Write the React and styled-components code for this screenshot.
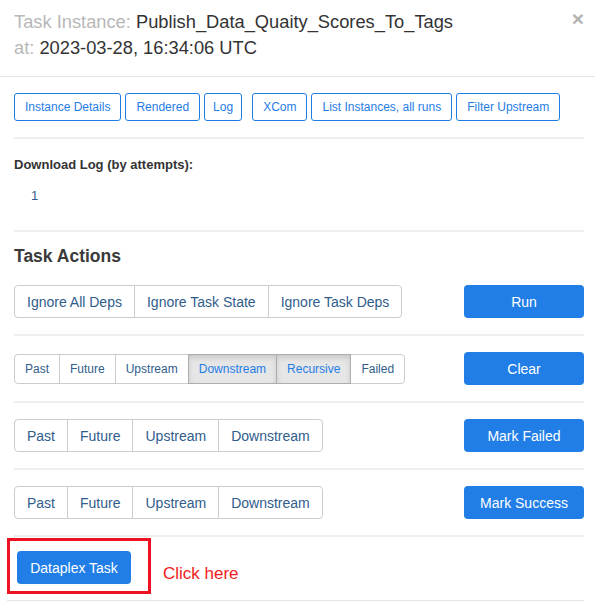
import React from 'react'
import styled, { createGlobalStyle, css } from 'styled-components'

const GlobalStyle = createGlobalStyle`
  body {
    margin: 0;
    background: #fff;
    font-family: "Liberation Sans", Arial, sans-serif;
    color: #333;
  }
`

const Modal = styled.div`
  width: 595px;
  height: 603px;
  overflow: hidden;
  background: #fff;
`

const Header = styled.div`
  position: relative;
  padding: 9px 40px 15px 14px;
  border-bottom: 1px solid #e5e5e5;
  font-size: 18.3px;
  line-height: 26px;
  color: #333;
`

const Muted = styled.span`
  color: #b8b8b8;
`

const Close = styled.span`
  position: absolute;
  top: 8px;
  right: 11px;
  font-size: 21px;
  font-weight: bold;
  color: #b3b3b3;
  line-height: 21px;
`

const Body = styled.div`
  padding: 0 11px 0 14px;
`

const Section = styled.div`
  padding: ${({pad}) => pad || '16px 0'};
  border-bottom: 2px solid #eee;
`

const Tabs = styled.div`
  display: flex;
  gap: 4px;
`

const TabButton = styled.button`
  height: 28px;
  padding: 0 ${({pad}) => pad || 10}px;
  margin-right: ${({gap}) => gap || 0}px;
  background: #fff;
  border: 1px solid #1f7de6;
  border-radius: 3px;
  color: #1f7de6;
  font-family: inherit;
  font-size: 12px;
`

const Label = styled.div`
  font-size: 13px;
  font-weight: bold;
  color: #333;
  margin-top: 2px;
`

const Attempt = styled.div`
  font-size: 13px;
  color: #305d8c;
  margin: 16px 0 12px 17px;
`

const Heading = styled.div`
  font-size: 17.5px;
  font-weight: bold;
  color: #3a3a3a;
  line-height: 20px;
  margin: 14px 0 19px;
`

const Row = styled.div`
  display: flex;
  align-items: center;
  justify-content: space-between;
  padding: ${({first}) => (first ? '0 0 16px' : '16px 0')};
  border-bottom: 2px solid #eee;
`

const Group = styled.div`
  display: flex;
`

const GroupButton = styled.button`
  height: ${({small}) => (small ? 30 : 33)}px;
  padding: 0 ${({small}) => (small ? 10 : 12)}px;
  background: #fff;
  border: 1px solid #ccc;
  margin-left: -1px;
  color: #305d8c;
  font-family: inherit;
  font-size: ${({small}) => (small ? 12 : 14)}px;
  &:first-child {
    margin-left: 0;
    border-radius: 4px 0 0 4px;
  }
  &:last-child {
    border-radius: 0 4px 4px 0;
  }
  ${({active}) => active && css`
    background: #e6e6e6;
    border-color: #adadad;
    color: #1f7de6;
    box-shadow: inset 0 3px 5px rgba(0, 0, 0, 0.125);
    position: relative;
  `}
`

const Primary = styled.button`
  width: ${({w}) => w || 120}px;
  height: 33px;
  background: #217ee7;
  border: none;
  border-radius: 4px;
  color: #fff;
  font-family: inherit;
  font-size: 14px;
`

const Footer = styled.div`
  display: flex;
  align-items: flex-end;
  padding: 1px 0 6px;
  margin-left: -7px;
  border-bottom: 1px solid #e5e5e5;
`

const Highlight = styled.div`
  border: 3px solid #ee1122;
  padding: 10px 17px 7px 7px;
`

const Hint = styled.span`
  color: #f02020;
  font-size: 17px;
  margin: 0 0 10px 12px;
`

const tabs = ['Instance Details', 'Rendered', 'Log', 'XCom', 'List Instances, all runs', 'Filter Upstream']

const actions = [
  { items: ['Past', 'Future', 'Upstream', 'Downstream', 'Recursive', 'Failed'], small: true, active: ['Downstream', 'Recursive'], label: 'Clear' },
  { items: ['Past', 'Future', 'Upstream', 'Downstream'], label: 'Mark Failed' },
  { items: ['Past', 'Future', 'Upstream', 'Downstream'], label: 'Mark Success' },
]

const App = () => {
  return (
    <Modal>
      <GlobalStyle />
      <Header>
        <div><Muted>Task Instance: </Muted>Publish_Data_Quaity_Scores_To_Tags</div>
        <div><Muted>at: </Muted>2023-03-28, 16:34:06 UTC</div>
        <Close>×</Close>
      </Header>
      <Body>
        <Section>
          <Tabs>
            {tabs.map(t => (
              <TabButton key={t} pad={t === 'Log' ? 8 : 10} gap={t === 'Log' ? 6 : 0}>{t}</TabButton>
            ))}
          </Tabs>
        </Section>
        <Section pad="16px 0 15px">
          <Label>Download Log (by attempts):</Label>
          <Attempt>1</Attempt>
        </Section>
        <Heading>Task Actions</Heading>
        <Row first>
          <Group>
            <GroupButton>Ignore All Deps</GroupButton>
            <GroupButton>Ignore Task State</GroupButton>
            <GroupButton>Ignore Task Deps</GroupButton>
          </Group>
          <Primary>Run</Primary>
        </Row>
        {actions.map(a => (
          <Row key={a.label}>
            <Group>
              {a.items.map(i => (
                <GroupButton key={i} small={a.small} active={a.active && a.active.includes(i)}>{i}</GroupButton>
              ))}
            </Group>
            <Primary>{a.label}</Primary>
          </Row>
        ))}
        <Footer>
          <Highlight>
            <Primary w={114}>Dataplex Task</Primary>
          </Highlight>
          <Hint>Click here</Hint>
        </Footer>
      </Body>
    </Modal>
  )
}

export default App
